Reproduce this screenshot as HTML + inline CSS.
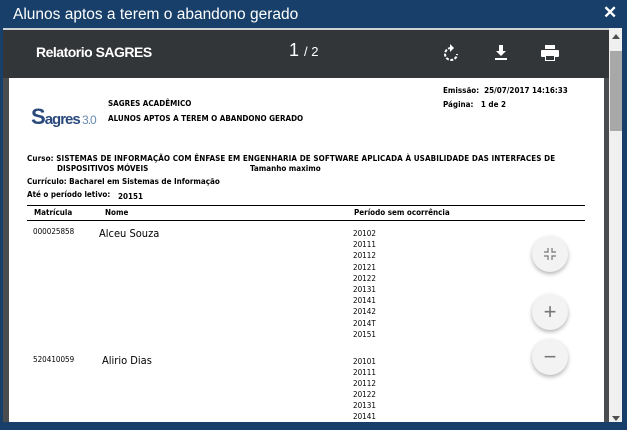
<!DOCTYPE html>
<html><head><meta charset="utf-8"><style>
*{margin:0;padding:0;box-sizing:border-box}
body{width:627px;height:430px;background:#173f69;position:relative;overflow:hidden;font-family:"Liberation Sans",sans-serif}
.t{position:absolute;left:13px;top:6px;color:#fff;font-size:15.5px;font-family:"Liberation Sans",sans-serif}
.x{position:absolute;left:603px;top:3px;color:#fff;font-size:17px;font-weight:bold}
.frame{position:absolute;left:3px;top:28px;width:619px;height:394px;background:#4a4d50}
.tb{position:absolute;left:3px;top:28px;width:606px;height:50px;background:#323639;border-top:2px solid #cfd3d6}
.page{position:absolute;left:9px;top:78px;width:595px;height:344px;background:#fff;overflow:hidden}
.sb{position:absolute;left:609px;top:28px;width:13px;height:394px;background:#f0f0f0}
.thumb{position:absolute;left:610px;top:51px;width:12px;height:80px;background:#a8a8a8}
.a{position:absolute;font-size:8px;font-weight:bold;color:#000;font-family:"DejaVu Sans Condensed","Liberation Sans",sans-serif;white-space:nowrap}
.n{position:absolute;font-size:8px;color:#000;font-family:"DejaVu Sans Condensed","Liberation Sans",sans-serif}
.btn{position:absolute;width:36px;height:36px;border-radius:50%;background:#f3f3f3;box-shadow:0 2px 4px rgba(0,0,0,.3);color:#777;text-align:center;line-height:36px;font-size:22px}
</style></head><body>
<div class="t">Alunos aptos a terem o abandono gerado</div>
<div class="x">✕</div>
<div class="frame"></div>
<div class="tb">
<div style="position:absolute;left:33px;top:14px;color:#fff;font-size:14px;font-weight:bold;letter-spacing:-.5px">Relatorio SAGRES</div>
<div style="position:absolute;left:286px;top:10px;color:#fff;font-size:18px">1 <span style="font-size:13px">/ 2</span></div>
<svg style="position:absolute;left:440px;top:14px" width="16" height="18" viewBox="0 0 16 18"><path d="M8 4a6 6 0 1 0 6 6" fill="none" stroke="#fff" stroke-width="2" stroke-dasharray="3 1.5"/><path d="M7 0l4 4-4 4z" fill="#fff"/></svg>
<svg style="position:absolute;left:491px;top:15px" width="14" height="16" viewBox="0 0 14 16"><path d="M5 0h4v6h3l-5 5-5-5h3z" fill="#fff"/><rect x="1" y="13" width="12" height="2" fill="#fff"/></svg>
<svg style="position:absolute;left:538px;top:15px" width="18" height="16" viewBox="0 0 18 16"><rect x="4" y="0" width="10" height="4" fill="#fff"/><rect x="0" y="5" width="18" height="7" rx="1" fill="#fff"/><rect x="4" y="10" width="10" height="6" fill="#fff"/><rect x="5" y="11" width="8" height="4" fill="#323639"/></svg>
</div>
<div class="sb"></div><div class="thumb"></div>
<div style="position:absolute;left:612px;top:34px;width:0;height:0;border-left:4px solid transparent;border-right:4px solid transparent;border-bottom:5px solid #505050"></div>
<div style="position:absolute;left:612px;top:416px;width:0;height:0;border-left:4px solid transparent;border-right:4px solid transparent;border-top:5px solid #505050"></div>
<div class="page"></div>
<div style="position:absolute;left:31px;top:105px;font-size:22px;font-weight:bold;color:#2a4a7c;font-family:'Liberation Sans',sans-serif;letter-spacing:-1px;line-height:24px">S<span style="font-size:15px">agres</span><span style="font-size:12px;color:#6a8ab0;font-weight:normal"> 3.0</span></div>
<div class="a" style="left:108px;top:99px">SAGRES ACADÊMICO</div>
<div class="a" style="left:108px;top:114px">ALUNOS APTOS A TEREM O ABANDONO GERADO</div>
<div class="a" style="left:443px;top:86px">Emissão:&nbsp; 25/07/2017 14:16:33</div>
<div class="a" style="left:443px;top:100px">Página:&nbsp;&nbsp; 1 de 2</div>
<div class="a" style="left:27px;top:154px;letter-spacing:.1px">Curso: SISTEMAS DE INFORMAÇÃO COM ÊNFASE EM ENGENHARIA DE SOFTWARE APLICADA À USABILIDADE DAS INTERFACES DE</div>
<div class="a" style="left:57px;top:164px">DISPOSITIVOS MÓVEIS</div>
<div class="a" style="left:250px;top:164px">Tamanho maximo</div>
<div class="a" style="left:27px;top:177px">Currículo: Bacharel em Sistemas de Informação</div>
<div class="a" style="left:27px;top:190px">Até o período letivo:</div>
<div class="a" style="left:118px;top:192px">20151</div>
<div style="position:absolute;left:27px;top:205px;width:558px;height:1px;background:#000"></div>
<div class="a" style="left:34px;top:208px">Matrícula</div>
<div class="a" style="left:105px;top:208px">Nome</div>
<div class="a" style="left:354px;top:208px">Período sem ocorrência</div>
<div style="position:absolute;left:27px;top:220px;width:558px;height:1px;background:#000"></div>
<div class="n" style="left:33px;top:227px">000025858</div>
<div class="n" style="left:99px;top:227px;font-size:11px">Alceu Souza</div>
<div class="n" style="left:353px;top:228px;line-height:11.2px">20102<br>20111<br>20112<br>20121<br>20122<br>20131<br>20141<br>20142<br>2014T<br>20151</div>
<div class="n" style="left:33px;top:355px">520410059</div>
<div class="n" style="left:102px;top:354px;font-size:11px">Alirio Dias</div>
<div class="n" style="left:353px;top:356px;line-height:11px">20101<br>20111<br>20112<br>20122<br>20131<br>20141</div>
<div class="btn" style="left:532px;top:236px"><svg style="position:absolute;left:12px;top:12px" width="12" height="12" viewBox="0 0 12 12"><path d="M4 0v4H0M8 0v4h4M4 12V8H0M8 12V8h4" fill="none" stroke="#777" stroke-width="1.2"/></svg></div>
<div class="btn" style="left:532px;top:294px">+</div>
<div class="btn" style="left:532px;top:339px">−</div>
</body></html>
